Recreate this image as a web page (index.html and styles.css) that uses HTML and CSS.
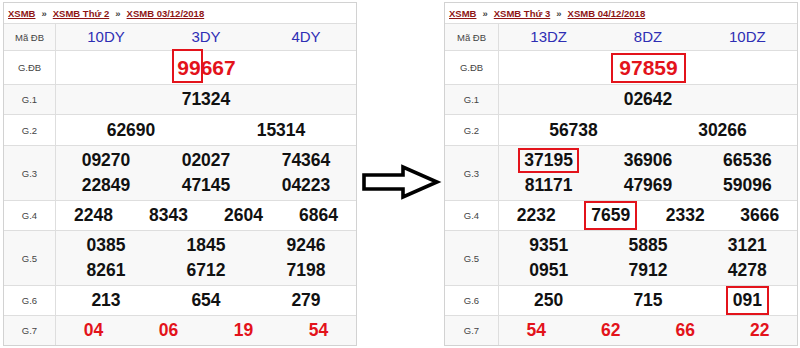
FILE: index.html
```html
<!DOCTYPE html>
<html lang="vi">
<head>
<meta charset="utf-8">
<title>XSMB</title>
<link rel="stylesheet" href="styles.css">
</head>
<body>
<div class="page">
  <section class="board">
    <div class="crumb"><a href="#">XSMB</a><span class="sep">»</span><a href="#">XSMB Thứ 2</a><span class="sep">»</span><a href="#">XSMB 03/12/2018</a></div>
    <div class="row h-code alt"><div class="label">Mã ĐB</div><div class="vals c3"><span class="code">10DY</span><span class="code">3DY</span><span class="code">4DY</span></div></div>
    <div class="row h-db"><div class="label">G.ĐB</div><div class="vals c1"><span class="num big red"><span class="mark">99</span>667</span></div></div>
    <div class="row h-1 alt"><div class="label">G.1</div><div class="vals c1"><span class="num">71324</span></div></div>
    <div class="row h-2"><div class="label">G.2</div><div class="vals c2"><span class="num">62690</span><span class="num">15314</span></div></div>
    <div class="row h-3 alt"><div class="label">G.3</div><div class="vals c3"><span class="num">09270</span><span class="num">02027</span><span class="num">74364</span><span class="num">22849</span><span class="num">47145</span><span class="num">04223</span></div></div>
    <div class="row h-4"><div class="label">G.4</div><div class="vals c4"><span class="num">2248</span><span class="num">8343</span><span class="num">2604</span><span class="num">6864</span></div></div>
    <div class="row h-5 alt"><div class="label">G.5</div><div class="vals c3"><span class="num">0385</span><span class="num">1845</span><span class="num">9246</span><span class="num">8261</span><span class="num">6712</span><span class="num">7198</span></div></div>
    <div class="row h-6"><div class="label">G.6</div><div class="vals c3"><span class="num">213</span><span class="num">654</span><span class="num">279</span></div></div>
    <div class="row h-7 alt"><div class="label">G.7</div><div class="vals c4"><span class="num red">04</span><span class="num red">06</span><span class="num red">19</span><span class="num red">54</span></div></div>
  </section>

  <svg class="arrow" width="87" height="40" viewBox="0 0 87 40" aria-hidden="true">
    <polygon points="7,13 46,13 46,5 80,20 46,35 46,27 7,27" fill="#fff" stroke="#000" stroke-width="3.6" stroke-linejoin="miter"/>
  </svg>

  <section class="board board--right">
    <div class="crumb"><a href="#">XSMB</a><span class="sep">»</span><a href="#">XSMB Thứ 3</a><span class="sep">»</span><a href="#">XSMB 04/12/2018</a></div>
    <div class="row h-code alt"><div class="label">Mã ĐB</div><div class="vals c3"><span class="code">13DZ</span><span class="code">8DZ</span><span class="code">10DZ</span></div></div>
    <div class="row h-db"><div class="label">G.ĐB</div><div class="vals c1"><span class="num big red"><span class="box box--db">97859</span></span></div></div>
    <div class="row h-1 alt"><div class="label">G.1</div><div class="vals c1"><span class="num">02642</span></div></div>
    <div class="row h-2"><div class="label">G.2</div><div class="vals c2"><span class="num">56738</span><span class="num">30266</span></div></div>
    <div class="row h-3 alt"><div class="label">G.3</div><div class="vals c3"><span class="num"><span class="box">37195</span></span><span class="num">36906</span><span class="num">66536</span><span class="num">81171</span><span class="num">47969</span><span class="num">59096</span></div></div>
    <div class="row h-4"><div class="label">G.4</div><div class="vals c4"><span class="num">2232</span><span class="num"><span class="box box--tall">7659</span></span><span class="num">2332</span><span class="num">3666</span></div></div>
    <div class="row h-5 alt"><div class="label">G.5</div><div class="vals c3"><span class="num">9351</span><span class="num">5885</span><span class="num">3121</span><span class="num">0951</span><span class="num">7912</span><span class="num">4278</span></div></div>
    <div class="row h-6"><div class="label">G.6</div><div class="vals c3"><span class="num">250</span><span class="num">715</span><span class="num"><span class="box box--tall">091</span></span></div></div>
    <div class="row h-7 alt"><div class="label">G.7</div><div class="vals c4"><span class="num red">54</span><span class="num red">62</span><span class="num red">66</span><span class="num red">22</span></div></div>
  </section>
</div>
</body>
</html>
```

FILE: styles.css
```css
* { box-sizing: border-box; }

html, body {
  margin: 0;
  padding: 0;
  background: #fff;
}

body {
  font-family: "Liberation Sans", Arial, sans-serif;
  color: #111;
}

.page {
  display: flex;
  align-items: flex-start;
  padding: 2px 0 0 3px;
}

.board {
  width: 354px;
  border: 1px solid #d2d2d2;
  background: #fff;
  --lab: 52px;
}

.board--right {
  --lab: 54px;
}

.arrow {
  flex: none;
  margin-top: 160px;
  display: block;
}

.crumb {
  height: 20px;
  display: flex;
  align-items: center;
  padding-left: 4px;
  font-size: 9.5px;
  font-weight: bold;
  white-space: nowrap;
}

.crumb a {
  color: #8e1414;
  text-decoration: underline;
}

.crumb .sep {
  color: #444;
  margin: 0 6px;
}

.row {
  display: grid;
  grid-template-columns: var(--lab) 1fr;
  border-top: 1px solid #dedede;
}

.row.alt {
  background: #f8f8f8;
}

.h-code { height: 27px; }
.h-db { height: 34px; }
.h-1 { height: 30px; }
.h-2 { height: 31px; }
.h-3 { height: 55px; }
.h-4 { height: 30px; }
.h-5 { height: 55px; }
.h-6 { height: 30px; }
.h-7 { height: 30px; }

.label {
  border-right: 1px solid #dedede;
  display: flex;
  align-items: center;
  justify-content: center;
  font-size: 9.5px;
  color: #444;
}

.vals {
  display: grid;
  align-content: center;
  justify-items: center;
  align-items: center;
}

.c1 { grid-template-columns: 1fr; }
.c2 { grid-template-columns: repeat(2, 1fr); }
.c3 { grid-template-columns: repeat(3, 1fr); }
.c4 { grid-template-columns: repeat(4, 1fr); }

.code {
  font-size: 15px;
  color: #2e2eb4;
  line-height: 20px;
}

.num {
  font-size: 17.5px;
  font-weight: bold;
  line-height: 25px;
  color: #111;
}

.num.big {
  font-size: 21px;
  line-height: 33px;
  padding-left: 1px;
}

.num.red {
  color: #e3131b;
}

.mark {
  position: relative;
  display: inline-block;
}

.mark::after {
  content: "";
  position: absolute;
  left: -5px;
  right: -2px;
  top: -2px;
  bottom: 1px;
  border: 2px solid #e3131b;
}

.box {
  display: inline-block;
  border: 2px solid #e3131b;
  padding: 0 4px;
  line-height: 21px;
}

.box--tall {
  padding: 2px 5px;
}

.box--db {
  line-height: 26px;
  padding: 0 6px;
}
```
